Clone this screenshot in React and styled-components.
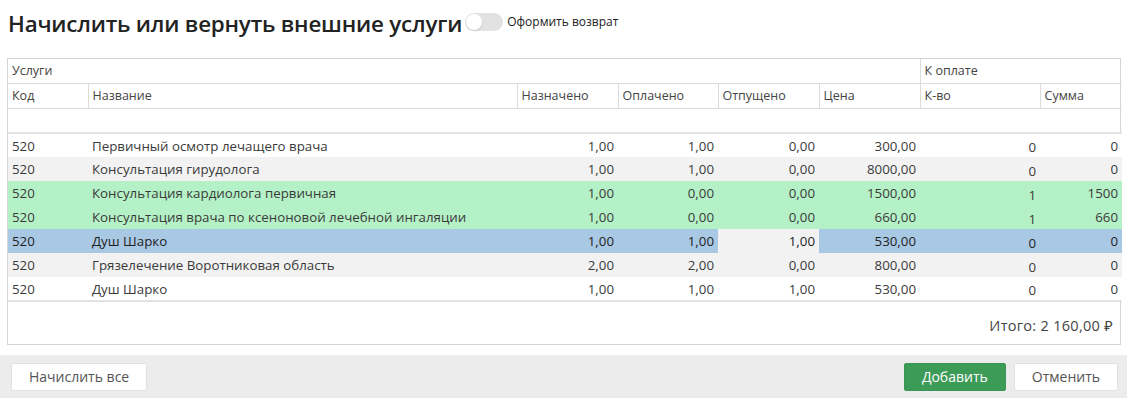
import React from 'react';
import styled, { createGlobalStyle } from 'styled-components';

const GlobalStyle = createGlobalStyle`
    body {
        margin: 0;
        background: #fff;
        font-family: 'Open Sans', 'Noto Sans', sans-serif;
        color: #333;
    }
`;

const columns = [
    { key: 'code', title: 'Код', width: 80, align: 'left' },
    { key: 'name', title: 'Название', width: 429, align: 'left' },
    { key: 'assigned', title: 'Назначено', width: 101, align: 'right' },
    { key: 'paid', title: 'Оплачено', width: 100, align: 'right' },
    { key: 'released', title: 'Отпущено', width: 101, align: 'right' },
    { key: 'price', title: 'Цена', width: 101, align: 'right' },
    { key: 'qty', title: 'К-во', width: 120, align: 'right' },
    { key: 'sum', title: 'Сумма', width: 82, align: 'right' },
];

const rows = [
    { code: '520', name: 'Первичный осмотр лечащего врача', assigned: '1,00', paid: '1,00', released: '0,00', price: '300,00', qty: '0', sum: '0', tone: 'plain' },
    { code: '520', name: 'Консультация гирудолога', assigned: '1,00', paid: '1,00', released: '0,00', price: '8000,00', qty: '0', sum: '0', tone: 'striped' },
    { code: '520', name: 'Консультация кардиолога первичная', assigned: '1,00', paid: '0,00', released: '0,00', price: '1500,00', qty: '1', sum: '1500', tone: 'charged' },
    { code: '520', name: 'Консультация врача по ксеноновой лечебной ингаляции', assigned: '1,00', paid: '0,00', released: '0,00', price: '660,00', qty: '1', sum: '660', tone: 'charged' },
    { code: '520', name: 'Душ Шарко', assigned: '1,00', paid: '1,00', released: '1,00', price: '530,00', qty: '0', sum: '0', tone: 'selected', editing: 'released' },
    { code: '520', name: 'Грязелечение Воротниковая область', assigned: '2,00', paid: '2,00', released: '0,00', price: '800,00', qty: '0', sum: '0', tone: 'striped' },
    { code: '520', name: 'Душ Шарко', assigned: '1,00', paid: '1,00', released: '1,00', price: '530,00', qty: '0', sum: '0', tone: 'plain' },
];

const tones = {
    plain: '#ffffff',
    striped: '#f2f2f2',
    charged: '#b5f1c6',
    selected: '#a9c8e4',
};

export default function App() {
    return (
        <>
            <GlobalStyle />
            <Page>
                <TitleBar>
                    <Title>Начислить или вернуть внешние услуги</Title>
                    <Toggle>
                        <Knob />
                    </Toggle>
                    <ToggleLabel>Оформить возврат</ToggleLabel>
                </TitleBar>
                <TableBox>
                    <Table>
                        <colgroup>
                            {columns.map(c => (
                                <col key={c.key} style={{ width: c.width }} />
                            ))}
                        </colgroup>
                        <thead>
                            <tr>
                                <GroupCell colSpan={6}>Услуги</GroupCell>
                                <GroupCell colSpan={2} divided>
                                    К оплате
                                </GroupCell>
                            </tr>
                            <tr>
                                {columns.map((c, i) => (
                                    <HeadCell key={c.key} first={i === 0}>
                                        {c.title}
                                    </HeadCell>
                                ))}
                            </tr>
                        </thead>
                        <tbody>
                            <FilterRow>
                                <td colSpan={8} />
                            </FilterRow>
                            {rows.map((r, i) => (
                                <DataRow key={i} $bg={tones[r.tone]} $strong={r.tone === 'selected'}>
                                    {columns.map(c => (
                                        <Cell
                                            key={c.key}
                                            $align={c.align}
                                            $editing={r.editing === c.key}
                                            $low={c.key === 'qty'}
                                        >
                                            {r[c.key]}
                                        </Cell>
                                    ))}
                                </DataRow>
                            ))}
                        </tbody>
                    </Table>
                    <Total>Итого: 2 160,00 ₽</Total>
                </TableBox>
            </Page>
            <Footer>
                <Button>Начислить все</Button>
                <Spacer />
                <Button primary>Добавить</Button>
                <Button>Отменить</Button>
            </Footer>
        </>
    );
}

const Page = styled.div`
    padding: 0 6px 0 7px;
    height: 355px;
    box-sizing: border-box;
`;
const TitleBar = styled.div`
    display: flex;
    align-items: center;
    height: 44px;
    padding-left: 1px;
    padding-top: 1px;
`;
const Title = styled.h1`
    margin: 0;
    font-size: 22.4px;
    font-weight: 600;
    color: #222;
    letter-spacing: -0.2px;
`;
const Toggle = styled.div`
    width: 38px;
    height: 18px;
    border-radius: 9px;
    background: #e2e2e2;
    margin-left: 3px;
    position: relative;
    margin-top: -2px;
`;
const Knob = styled.span`
    position: absolute;
    left: 1px;
    top: 1px;
    width: 16px;
    height: 16px;
    border-radius: 50%;
    background: #fff;
    box-shadow: 0 1px 2px rgba(0, 0, 0, 0.12);
`;
const ToggleLabel = styled.span`
    font-size: 12px;
    color: #222;
    margin-left: 4px;
    margin-top: -4px;
`;
const TableBox = styled.div`
    margin-top: 13px;
    border: 1px solid #d4d4d4;
    width: 1114px;
    box-sizing: border-box;
`;
const Table = styled.table`
    width: 100%;
    border-collapse: collapse;
    table-layout: fixed;
    font-size: 13.3px;
    line-height: 16px;
`;
const GroupCell = styled.th`
    box-sizing: border-box;
    height: 24px;
    padding: 0 4px;
    text-align: left;
    font-size: 12.5px;
    font-weight: 400;
    color: #444;
    border-bottom: 1px solid #dcdcdc;
    border-left: ${p => (p.divided ? '1px solid #dcdcdc' : 'none')};
`;
const HeadCell = styled.th`
    box-sizing: border-box;
    height: 25px;
    padding: 0 4px;
    text-align: left;
    font-size: 12.5px;
    font-weight: 400;
    color: #444;
    border-bottom: 1px solid #dcdcdc;
    border-left: ${p => (p.first ? 'none' : '1px solid #dcdcdc')};
`;
const FilterRow = styled.tr`
    td {
        box-sizing: border-box;
        height: 25px;
        padding: 0;
        border-bottom: 2px solid #e2e2e2;
    }
`;
const DataRow = styled.tr`
    background: ${p => p.$bg};
    color: ${p => (p.$strong ? '#1e1e1e' : '#3a3a3a')};
    &:last-child td {
        border-bottom: 2px solid #e2e2e2;
    }
`;
const Cell = styled.td`
    box-sizing: border-box;
    height: 24px;
    padding: ${p => (p.$low ? '3px 4px 0' : '0 4px')};
    text-align: ${p => p.$align};
    white-space: nowrap;
    overflow: hidden;
    background: ${p => (p.$editing ? '#f2f2f2' : 'transparent')};
`;
const Total = styled.div`
    height: 42px;
    display: flex;
    align-items: center;
    justify-content: flex-end;
    padding: 3px 7px 0 0;
    box-sizing: border-box;
    font-size: 14.5px;
    letter-spacing: 0.3px;
    color: #444;
`;
const Footer = styled.div`
    background: #ececec;
    height: 43px;
    display: flex;
    align-items: center;
    gap: 8px;
    padding: 0 9px 0 11px;
`;
const Spacer = styled.div`
    flex: 1;
`;
const Button = styled.button`
    height: 28px;
    padding: 0 17px;
    border: 1px solid ${p => (p.primary ? '#3a9655' : '#e2e2e2')};
    border-radius: 2px;
    background: ${p => (p.primary ? '#3c9b57' : '#fff')};
    color: ${p => (p.primary ? '#fff' : '#555')};
    font-family: 'Open Sans', 'Noto Sans', sans-serif;
    font-size: 14px;
    cursor: pointer;
`;
